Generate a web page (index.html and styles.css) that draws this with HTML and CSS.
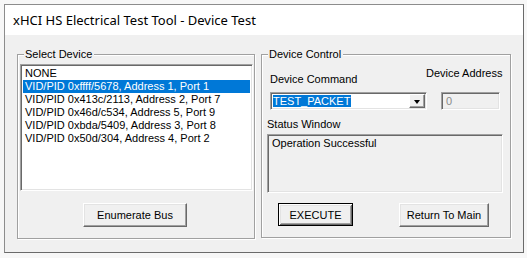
FILE: index.html
```html
<!DOCTYPE html>
<html lang="en">
<head>
  <meta charset="UTF-8" />
  <title>xHCI HS Electrical Test Tool - Device Test</title>
  <link rel="stylesheet" href="styles.css">
</head>
<body>
  <div class="window">
    <div class="titlebar">xHCI HS Electrical Test Tool - Device Test</div>
    <div class="dialog">
      <fieldset class="group group-left">
        <legend>Select Device</legend>
        <ul class="listbox">
          <li>NONE</li>
          <li class="selected">VID/PID 0xffff/5678, Address 1, Port 1</li>
          <li>VID/PID 0x413c/2113, Address 2, Port 7</li>
          <li>VID/PID 0x46d/c534, Address 5, Port 9</li>
          <li>VID/PID 0xbda/5409, Address 3, Port 8</li>
          <li>VID/PID 0x50d/304, Address 4, Port 2</li>
        </ul>
        <button type="button" class="btn btn-enum">Enumerate Bus</button>
      </fieldset>

      <fieldset class="group group-right">
        <legend>Device Control</legend>
        <div class="cmd-row">
          <div class="cmd-col">
            <div class="lbl lbl-cmd">Device Command</div>
            <div class="combo">
              <span class="combo-text"><span class="hl">TEST_PACKET</span></span>
              <span class="combo-btn"><span class="arrow"></span></span>
            </div>
          </div>
          <div class="addr-col">
            <div class="lbl lbl-addr">Device Address</div>
            <div class="edit disabled">0</div>
          </div>
        </div>
        <div class="lbl lbl-status">Status Window</div>
        <div class="status-box">Operation Successful</div>
        <div class="btn-row">
          <button type="button" class="btn btn-default btn-exec">EXECUTE</button>
          <button type="button" class="btn btn-return">Return To Main</button>
        </div>
      </fieldset>
    </div>
  </div>
</body>
</html>
```

FILE: styles.css
```css
/* classic win32 dialog look */
body {
  margin: 0;
  background: #f7f7f7;
  font-family: "Liberation Sans", Arial, sans-serif;
  font-size: 11px;
  color: #000;
}
.window {
  margin: 4px 0 0 4px;
  width: 520px;
  height: 249px;
  box-sizing: border-box;
  border: 1px solid #8c8c8c;
  border-right-color: #6a6a6a;
  border-bottom-color: #6a6a6a;
  display: flex;
  flex-direction: column;
}
.titlebar {
  height: 30px;
  line-height: 30px;
  background: #fff;
  padding-left: 8px;
  font-family: "Noto Sans", sans-serif;
  font-size: 13px;
  color: #000;
}
.dialog {
  flex: 1;
  background: #f0f0f0;
  display: flex;
  align-items: flex-start;
  padding: 13px 0 0 12px;
}
.group {
  margin: 0;
  padding: 0;
  border: 1px solid #a0a0a0;
  box-shadow: inset 1px 1px 0 #fff, 1px 1px 0 #fff;
  box-sizing: border-box;
}
.group legend {
  margin-left: 6px;
  padding: 0 2px 0 1px;
  line-height: 13px;
  background: #f0f0f0;
}
.group-left {
  width: 238px;
  height: 191px;
}
.group-right {
  width: 250px;
  height: 190px;
  margin-left: 6px;
}

/* sunken controls */
.listbox, .combo, .edit, .status-box {
  box-sizing: border-box;
  border: 1px solid;
  border-color: #a0a0a0 #fff #fff #a0a0a0;
  box-shadow: inset 1px 1px 0 #696969, inset -1px -1px 0 #e3e3e3;
}
.listbox {
  list-style: none;
  margin: 3px 0 0 2px;
  padding: 2px;
  width: 233px;
  height: 127px;
  background: #fff;
}
.listbox li {
  height: 13px;
  line-height: 13px;
  padding-left: 2px;
  white-space: nowrap;
}
.listbox li.selected {
  background: #0078d7;
  color: #fff;
}

/* raised buttons */
.btn {
  font-family: "Liberation Sans", Arial, sans-serif;
  font-size: 11px;
  color: #000;
  background: #f0f0f0;
  padding: 0;
  box-sizing: border-box;
  border: 1px solid;
  border-color: #fff #696969 #696969 #fff;
  box-shadow: inset -1px -1px 0 #a0a0a0, inset 1px 1px 0 #e3e3e3;
}
.btn-default {
  border-color: #000;
  box-shadow: inset 1px 1px 0 #fff, inset -1px -1px 0 #696969,
              inset 2px 2px 0 #e3e3e3, inset -2px -2px 0 #a0a0a0;
}
.btn-enum {
  display: block;
  margin: 12px 0 0 65px;
  width: 104px;
  height: 24px;
}

.lbl {
  line-height: 13px;
  white-space: nowrap;
}
.cmd-row {
  display: flex;
  align-items: flex-end;
  margin-top: 6px;
}
.cmd-col {
  margin-left: 8px;
}
.lbl-cmd {
  margin-bottom: 6px;
}
.combo {
  width: 157px;
  height: 18px;
  background: #fff;
  padding: 1px;
  display: flex;
  align-items: stretch;
}
.combo-text {
  flex: 1;
  padding: 1px 0 0 1px;
}
.hl {
  display: inline-block;
  background: #0078d7;
  color: #fff;
  line-height: 12px;
  padding-right: 1px;
}
.combo-btn {
  width: 16px;
  box-sizing: border-box;
  background: #f0f0f0;
  border: 1px solid;
  border-color: #fff #696969 #696969 #fff;
  box-shadow: inset -1px -1px 0 #a0a0a0;
  display: flex;
  align-items: center;
  justify-content: center;
}
.arrow {
  width: 0;
  height: 0;
  border-left: 3.5px solid transparent;
  border-right: 3.5px solid transparent;
  border-top: 4px solid #000;
  margin-top: 1px;
}
.addr-col {
  margin-left: 14px;
}
.lbl-addr {
  margin: 0 0 12px -15px;
}
.edit {
  width: 59px;
  height: 18px;
  padding: 2px 0 0 4px;
  line-height: 13px;
}
.edit.disabled {
  background: #f0f0f0;
  color: #8a8a8a;
}
.lbl-status {
  margin: 8px 0 3px 5px;
}
.status-box {
  margin-left: 5px;
  width: 236px;
  height: 59px;
  padding: 2px 0 0 4px;
  line-height: 13px;
  background: #f0f0f0;
}
.btn-row {
  display: flex;
  align-items: flex-start;
  margin: 10px 0 0 16px;
}
.btn-exec {
  width: 75px;
  height: 23px;
}
.btn-return {
  margin-left: 46px;
  width: 90px;
  height: 24px;
}
```
